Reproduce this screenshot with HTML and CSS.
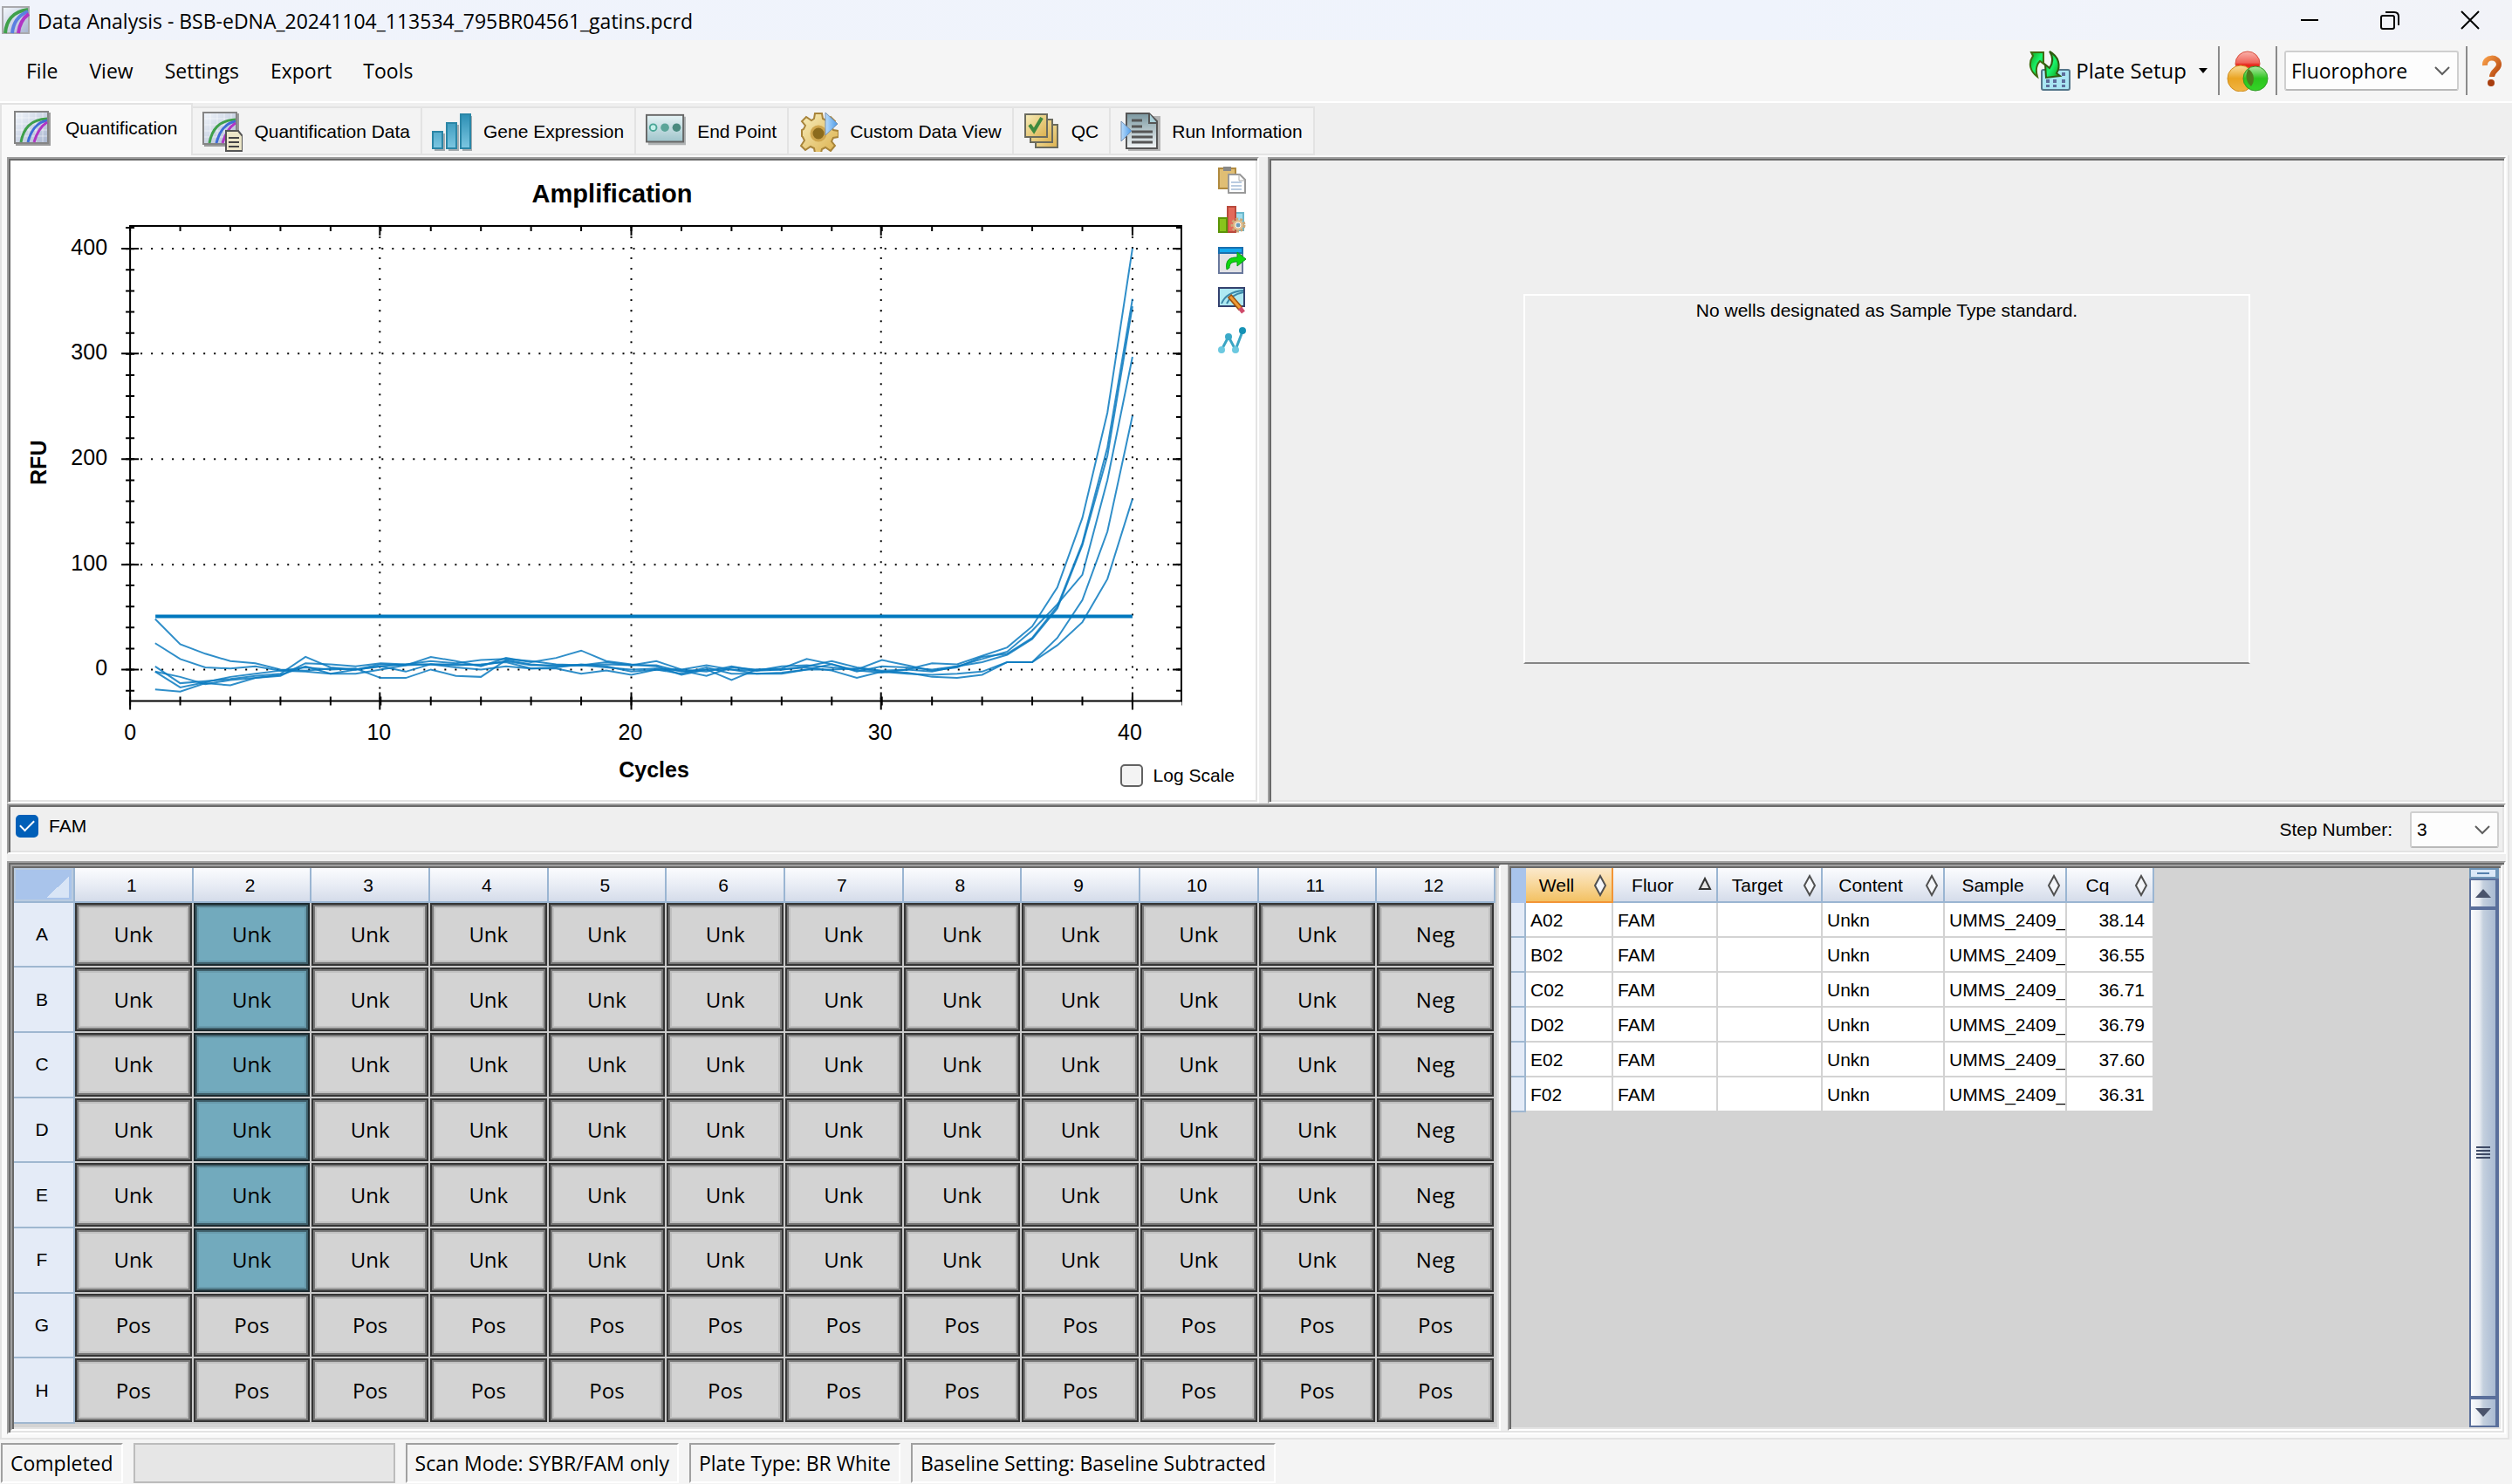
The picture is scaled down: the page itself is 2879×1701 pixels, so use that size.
FILE: index.html
```html
<!DOCTYPE html>
<html lang="en">
<head>
<meta charset="utf-8">
<title>Data Analysis - BSB-eDNA_20241104_113534_795BR04561_gatins.pcrd</title>
<link rel="stylesheet" href="styles.css">
</head>
<body>
<svg class="defs" aria-hidden="true">
  <defs>
    <linearGradient id="g-steel" x1="0" y1="0" x2="1" y2="1"><stop offset="0" stop-color="#f2f6fb"/><stop offset="1" stop-color="#a9b6d0"/></linearGradient>
    <linearGradient id="g-bar" x1="0" y1="0" x2="0" y2="1"><stop offset="0" stop-color="#2c8fb4"/><stop offset="1" stop-color="#7cc7e2"/></linearGradient>
    <linearGradient id="g-well" x1="0" y1="0" x2="0" y2="1"><stop offset="0" stop-color="#e6f3f5"/><stop offset="1" stop-color="#9fc4cb"/></linearGradient>
    <linearGradient id="g-gold" x1="0" y1="0" x2="1" y2="1"><stop offset="0" stop-color="#f7eebc"/><stop offset="1" stop-color="#dcb04c"/></linearGradient>
    <linearGradient id="g-doc" x1="0" y1="0" x2="0" y2="1"><stop offset="0" stop-color="#7b98a1"/><stop offset="1" stop-color="#f3f6f7"/></linearGradient>
    <linearGradient id="g-blue" x1="0" y1="0" x2="1" y2="0"><stop offset="0" stop-color="#b9dcfb"/><stop offset="1" stop-color="#4b9ae8"/></linearGradient>
    <linearGradient id="g-green" x1="0" y1="0" x2="1" y2="1"><stop offset="0" stop-color="#15a015"/><stop offset=".5" stop-color="#19f56e"/><stop offset="1" stop-color="#129a10"/></linearGradient>
    <linearGradient id="g-red" x1="0" y1="0" x2="0" y2="1"><stop offset="0" stop-color="#f9b3ac"/><stop offset=".45" stop-color="#f0665c"/><stop offset=".55" stop-color="#e8281c"/><stop offset="1" stop-color="#ea3a24"/></linearGradient>
    <linearGradient id="g-orange" x1="0" y1="0" x2="0" y2="1"><stop offset="0" stop-color="#f8dfa0"/><stop offset=".5" stop-color="#eaa422"/><stop offset="1" stop-color="#f0b545"/></linearGradient>
    <linearGradient id="g-lime" x1="0" y1="0" x2="0" y2="1"><stop offset="0" stop-color="#b4e8a8"/><stop offset=".5" stop-color="#2bc41d"/><stop offset="1" stop-color="#35d428"/></linearGradient>
    <linearGradient id="g-help" x1="0" y1="0" x2="1" y2="1"><stop offset="0" stop-color="#f59a45"/><stop offset="1" stop-color="#b4440d"/></linearGradient>
    <symbol id="i-curves" viewBox="0 0 42 40">
      <rect x="2" y="2" width="40" height="38" fill="#9a9a9a"/>
      <rect x="1" y="1" width="38" height="36" fill="url(#g-steel)" stroke="#858585" stroke-width="2"/>
      <path d="M2 8h36M2 15h36M2 22h36M2 29h36M9 2v34M17 2v34M25 2v34M33 2v34" stroke="#fff" stroke-opacity=".5"/>
      <g fill="none" stroke-width="3"><path d="M8 36C11 20 19 10 38 9" stroke="#3fa04b"/><path d="M16 36C19 24 26 13 38 11" stroke="#3e6cd6"/><path d="M23 36C26 26 30 18 38 13" stroke="#b035c4"/></g>
    </symbol>
    <symbol id="i-diamond" viewBox="0 0 18 26"><path d="M9 2L15 13 9 24 3 13z" fill="#f4f6fa" stroke="#505050" stroke-width="2"/></symbol>
    <symbol id="i-chevron" viewBox="0 0 18 12"><path d="M1 2L9 10 17 2" fill="none" stroke="#5f5f5f" stroke-width="2"/></symbol>
  </defs>
</svg>

<header class="titlebar">
  <svg class="app-icon" viewBox="0 0 32 32"><rect width="32" height="32" fill="#a9a9ad"/><rect x="2" y="2" width="28" height="28" fill="url(#g-steel)"/><g fill="none" stroke-width="4"><path d="M4 31C5 18 12 6 30 4" stroke="#3fa04b"/><path d="M12 31C13 20 18 11 30 6" stroke="#5b7fe0"/><path d="M19 31C20 22 24 14 31 9" stroke="#b035c4"/></g></svg>
  <h1 class="title">Data Analysis - BSB-eDNA_20241104_113534_795BR04561_gatins.pcrd</h1>
  <button class="win-btn" aria-label="Minimize"><svg viewBox="0 0 22 22"><path d="M1 11h20" stroke="#000" stroke-width="2"/></svg></button>
  <button class="win-btn" aria-label="Restore"><svg viewBox="0 0 22 22" fill="none" stroke="#000" stroke-width="2"><rect x="1" y="6" width="15" height="15" rx="2"/><path d="M6 2h10q5 0 5 5v10"/></svg></button>
  <button class="win-btn" aria-label="Close"><svg viewBox="0 0 22 22"><path d="M1 1l20 20M21 1L1 21" stroke="#000" stroke-width="2"/></svg></button>
</header>

<div class="menubar">
  <nav class="menu">
    <button>File</button><button>View</button><button>Settings</button><button>Export</button><button>Tools</button>
  </nav>
  <div class="tools">
    <button class="plate-setup">
      <svg class="ico48" viewBox="0 0 48 48">
        <rect x="15" y="23" width="32" height="23" rx="2" fill="#a9e6f3" stroke="#56768a" stroke-width="2"/>
        <path d="M20 34h4v4h-4zM28 34h4v4h-4zM38 34h4v4h-4zM20 40h4v3h-4zM28 40h4v3h-4zM38 40h4v3h-4zM38 26h4v4h-4z" fill="#5d6f9c"/>
        <path d="M3 3h14v13l-4-3c-4 4-5 11-3 18C2 25-1 16 5 7z" fill="url(#g-green)" stroke="#3f6a10" stroke-width="2"/>
        <path d="M24 2c11 6 13 17 8 25l4 3-16 2-1-15 5 4c4-6 4-13 0-19z" fill="url(#g-green)" stroke="#2f5a10" stroke-width="2"/>
      </svg>
      <span>Plate Setup</span>
      <svg class="caret" viewBox="0 0 10 6"><path d="M0 0h10L5 6z"/></svg>
    </button>
    <i class="sep"></i>
    <button class="icon-btn" aria-label="Fluorophore colors"><svg class="ico48" viewBox="0 0 48 48">
      <circle cx="24" cy="16" r="14" fill="url(#g-red)" stroke="#d9503f"/><circle cx="16" cy="33" r="15" fill="url(#g-orange)" stroke="#d08c1d"/><circle cx="33" cy="33" r="14" fill="url(#g-lime)" stroke="#2f9c24"/><path d="M25 22a14 14 0 0 1 3 20 15 15 0 0 1-3-20" fill="#4d7d1e"/></svg></button>
    <i class="sep"></i>
    <span class="combo combo-fluor"><select aria-label="Color by"><option>Fluorophore</option></select><svg><use href="#i-chevron"/></svg></span>
    <i class="sep"></i>
    <button class="help" aria-label="Help"><svg viewBox="0 0 24 36"><path d="M4 12C3 1 20 1 20 11c0 6-8 7-8 14" fill="none" stroke="url(#g-help)" stroke-width="6"/><circle cx="11" cy="32" r="4" fill="#a83e0f"/></svg></button>
  </div>
</div>

<nav class="tabs">
  <button class="tab selected"><svg class="tab-ico"><use href="#i-curves"/></svg>Quantification</button>
  <button class="tab"><svg class="tab-ico" viewBox="0 0 46 46"><use href="#i-curves" width="42" height="40"/><path d="M27 22h14l5 6v17H27z" fill="#ece6c8" stroke="#555" stroke-width="2"/><path d="M30 30h12M30 35h12M30 40h12" stroke="#444" stroke-width="2"/></svg>Quantification Data</button>
  <button class="tab"><svg class="tab-ico" viewBox="0 0 46 44"><path d="M3 24h12v20H3zM19 14h12v30H19zM35 4h11v40H35z" fill="#a5abae"/><path d="M1 22h11v19H1zM17 12h11v29H17zM33 2h11v39H33z" fill="url(#g-bar)" stroke="#2b86a6" stroke-width="2"/></svg>Gene Expression</button>
  <button class="tab"><svg class="tab-ico" viewBox="0 0 48 44"><path d="M3 4h45v34H3z" fill="#b0b3b4"/><rect x="1" y="2" width="44" height="32" fill="url(#g-well)" stroke="#666" stroke-width="2"/><circle cx="9" cy="17" r="4" fill="#c5f0ea" stroke="#49a596" stroke-width="2"/><circle cx="23" cy="17" r="5" fill="#5ba599"/><circle cx="37" cy="17" r="5" fill="#498a7f"/></svg>End Point</button>
  <button class="tab"><svg class="tab-ico" viewBox="0 0 46 46"><path d="M19 2h8l1 6 4 2 5-4 5 5-4 6 2 4 6 1v7l-6 1-2 4 4 5-5 6-6-4-4 2-1 4h-7l-1-5-4-2-6 4-5-5 4-6-2-4-1-1V21l2-1 2-4-4-5 5-5 6 4 3-2z" fill="url(#g-gold)" stroke="#a8843a" stroke-width="2"/><circle cx="23" cy="25" r="8" fill="#8b6b1d" stroke="#cfa64d" stroke-width="3"/><path d="M31 1v26l14-13z" fill="url(#g-blue)" stroke="#7790b0"/></svg>Custom Data View</button>
  <button class="tab"><svg class="tab-ico qc" viewBox="0 0 42 44"><g fill="url(#g-gold)" stroke="#6b6b5e" stroke-width="2"><rect x="14" y="14" width="25" height="26"/><rect x="8" y="8" width="25" height="26"/><rect x="2" y="2" width="25" height="26"/></g><path d="M7 14l5 7 9-15" fill="none" stroke="#3f8a3f" stroke-width="4"/></svg>QC</button>
  <button class="tab"><svg class="tab-ico" viewBox="0 0 46 44"><path d="M9 4h37v40H9z" fill="#b4b4b4"/><path d="M7 1h26l9 9v31H7z" fill="url(#g-doc)" stroke="#555" stroke-width="2"/><path d="M33 1v11h9" fill="#a9cfd8" stroke="#555" stroke-width="2"/><path d="M13 9h12M13 16h12M13 22h24M13 28h24M13 34h24" stroke="#555" stroke-width="3"/><path d="M1 10v23l12-12z" fill="url(#g-blue)" stroke="#7790b0"/></svg>Run Information</button>
</nav>

<main class="page">
  <div class="upper">
    <section class="bevel chart-pane">
      <svg class="chart" viewBox="12 184 1368 732" role="img" aria-label="Amplification chart">
        <g stroke="#000" stroke-width="2" fill="none">
          <path d="M149 285H1353M149 405H1353M149 526H1353M149 647H1353M149 767H1353M435 259V803M723 259V803M1009 259V803M1297 259V803" stroke-dasharray="2 10"/>
          <path d="M149 259V813M148 259H1353V804M149 803H1353"/>
          <path d="M139 285h20M139 405h20M139 526h20M139 647h20M139 767h20M1343 285h10M1343 405h10M1343 526h10M1343 647h10M1343 767h10"/>
          <path d="M435 793v20M723 793v20M1009 793v20M1297 793v20M435 259v11M723 259v11M1009 259v11M1297 259v11"/>
        </g>
        <g stroke="#000" fill="none">
          <path d="M149 260V804" stroke-width="10" stroke-dasharray="2 22.1"/>
          <path d="M1350 260V804" stroke-width="6" stroke-dasharray="2 22.1"/>
          <path d="M148 803H1354" stroke-width="10" stroke-dasharray="2 55.4"/>
          <path d="M148 262H1354" stroke-width="6" stroke-dasharray="2 55.4"/>
        </g>
        <g class="series" transform="translate(149 767) scale(28.7 -1.206)">
          <path d="M1 48L2 24 3 15 4 8 5 6 6 0 7-1 8 1 9 0 10 3 11 5 12 8 13 6 14 9 15 10 16 8 17 5 18 4 19 5 20 4 21 8 22 0 23-2 24 3 25-1 26 0 27 3 28 8 29 2 30-1 31 0 32 6 33 5 34 13 35 21 36 41 37 78 38 144 39 244 40 400"/>
          <path d="M1 25L2 10 3 2 4 1 5 3 6-1 7 2 8 0 9 1 10-8 11-8 12 0 13-6 14-7 15 9 16 5 17 3 18 4 19 2 20 0 21 1 22 0 23 4 24 0 25-1 26 3 27 4 28 2 29 0 30 9 31 4 32-1 33 2 34 12 35 15 36 30 37 60 38 120 39 211 40 352"/>
          <path d="M1 3L2-13 3-11 4-9 5-6 6-4 7 12 8 2 9 0 10 5 11 4 12 5 13 5 14 4 15 8 16 4 17 4 18 4 19 7 20 4 21 4 22-2 23 0 24-10 25 0 26 1 27 10 28 5 29-2 30 3 31 2 32 0 33 3 34 7 35 14 36 29 37 58 38 118 39 203 40 345"/>
          <path d="M1-2L2-17 3-12 4-7 5-4 6-1 7-2 8-4 9-4 10 0 11 4 12 12 13 8 14 3 15 11 16 7 17 11 18 18 19 8 20 5 21 3 22-5 23 0 24 0 25-4 26-3 27 0 28 5 29-1 30-3 31 0 32-2 33 3 34 10 35 17 36 37 37 62 38 90 39 180 40 297"/>
          <path d="M1-2L2-7 3-14 4-10 5-8 6-5 7 3 8-4 9 0 10 3 11-2 12 5 13 2 14 0 15 3 16 1 17 1 18-4 19-1 20-5 21 0 22-1 23-6 24 2 25 0 26 0 27 2 28-1 29-8 30-2 31-4 32-5 33-4 34-2 35 7 36 7 37 30 38 66 39 131 40 241"/>
          <path d="M1-19L2-21 3-13 4-15 5-8 6-6 7 6 8 5 9 3 10 6 11 5 12 5 13 4 14 5 15 7 16 1 17 2 18 5 19 3 20-2 21 0 22-4 23 2 24-4 25-4 26-4 27 0 28 0 29 1 30-2 31-3 32-7 33-8 34-5 35 7 36 7 37 23 38 45 39 86 40 162"/>
        </g>
        <path class="threshold" d="M178 706H1297"/>
        <g class="tick-label" text-anchor="end"><text x="123" y="292">400</text><text x="123" y="412">300</text><text x="123" y="533">200</text><text x="123" y="654">100</text><text x="123" y="774">0</text></g>
        <g class="tick-label" text-anchor="middle"><text x="149" y="848">0</text><text x="434" y="848">10</text><text x="722" y="848">20</text><text x="1008" y="848">30</text><text x="1294" y="848">40</text></g>
        <g class="axis-title" text-anchor="middle"><text x="749" y="890">Cycles</text><text transform="translate(53 530) rotate(-90)">RFU</text></g>
        <text class="chart-title" x="701" y="232" text-anchor="middle">Amplification</text>
      </svg>
      <div class="chart-tools">
        <button aria-label="Copy"><svg viewBox="0 0 32 32"><rect x="1" y="3" width="19" height="23" fill="#e0be74" stroke="#b08a3f" stroke-width="2"/><path d="M6 1h9v5H6z" fill="#888"/><path d="M12 10h13l6 6v15H12z" fill="#fff" stroke="#999" stroke-width="2"/><path d="M24 10v7h7" fill="none" stroke="#aaa"/><path d="M15 19h12M15 23h12M15 27h12" stroke="#b9cbe0" stroke-width="2"/></svg></button>
        <button aria-label="Chart settings"><svg viewBox="0 0 32 32"><rect x="19" y="8" width="10" height="20" fill="#9fdcec" stroke="#6cb8cd" stroke-width="2"/><rect x="11" y="1" width="9" height="29" fill="#e3695a" stroke="#b94a3d" stroke-width="2"/><rect x="1" y="14" width="9" height="16" fill="#88c41c" stroke="#5b9408" stroke-width="2"/><circle cx="23" cy="22" r="6" fill="#e3c090"/><circle cx="23" cy="22" r="7" fill="none" stroke="#cda878" stroke-width="3" stroke-dasharray="3 2"/><circle cx="23" cy="22" r="3" fill="#6f9cb8" stroke="#fff"/></svg></button>
        <button aria-label="Export chart"><svg viewBox="0 0 32 32"><rect x="1" y="2" width="27" height="29" fill="#e2e2e6" stroke="#69789c" stroke-width="2"/><path d="M0 1h29v8H0z" fill="#1a6fae"/><path d="M2 3h25v4H2z" fill="#14a8ef"/><path d="M10 27c-2-12 4-14 12-14V7l10 8-10 8v-5c-6 0-9 2-9 7z" fill="#0fd80f" stroke="#0a9a1b"/></svg></button>
        <button aria-label="Edit trace style"><svg viewBox="0 0 32 32"><rect x="1" y="2" width="29" height="21" fill="#aee9f2" stroke="#34426f" stroke-width="2"/><path d="M4 20C8 10 16 6 29 5M10 20c3-7 9-11 19-13" fill="none" stroke="#3a87a8" stroke-width="2"/><path d="M13 11l13 15" stroke="#99500e" stroke-width="6"/><path d="M14 12l12 14" stroke="#f09a35" stroke-width="3"/><path d="M25 25l4 5" stroke="#cf4a6a" stroke-width="5"/></svg></button>
        <button aria-label="Data points"><svg viewBox="0 0 32 32"><path d="M4 27L12 12 20 27 28 6" fill="none" stroke="#3aa5c4" stroke-width="3"/><circle cx="4" cy="27" r="4" fill="#6cc9e0"/><circle cx="12" cy="12" r="4" fill="#3aa9c8"/><circle cx="20" cy="27" r="4" fill="#6cc9e0"/><circle cx="28" cy="5" r="4" fill="#1592b5"/></svg></button>
      </div>
      <label class="check log-scale"><input type="checkbox">Log Scale</label>
    </section>
    <section class="bevel standard-pane">
      <p class="notice">No wells designated as Sample Type standard.</p>
    </section>
  </div>

  <section class="bevel filter-bar">
    <label class="check fam"><input type="checkbox" checked>FAM</label>
    <label class="step" for="step">Step Number:</label>
    <span class="combo combo-step"><select id="step"><option>3</option></select><svg><use href="#i-chevron"/></svg></span>
  </section>

  <div class="bevel lower">
    <section class="bevel plate-pane">
      <table class="plate">
        <thead><tr><th class="corner" aria-label="Select all"></th><th>1</th><th>2</th><th>3</th><th>4</th><th>5</th><th>6</th><th>7</th><th>8</th><th>9</th><th>10</th><th>11</th><th>12</th></tr></thead>
        <tbody>
          <tr><th>A</th><td>Unk</td><td class="on">Unk</td><td>Unk</td><td>Unk</td><td>Unk</td><td>Unk</td><td>Unk</td><td>Unk</td><td>Unk</td><td>Unk</td><td>Unk</td><td>Neg</td></tr>
          <tr><th>B</th><td>Unk</td><td class="on">Unk</td><td>Unk</td><td>Unk</td><td>Unk</td><td>Unk</td><td>Unk</td><td>Unk</td><td>Unk</td><td>Unk</td><td>Unk</td><td>Neg</td></tr>
          <tr><th>C</th><td>Unk</td><td class="on">Unk</td><td>Unk</td><td>Unk</td><td>Unk</td><td>Unk</td><td>Unk</td><td>Unk</td><td>Unk</td><td>Unk</td><td>Unk</td><td>Neg</td></tr>
          <tr><th>D</th><td>Unk</td><td class="on">Unk</td><td>Unk</td><td>Unk</td><td>Unk</td><td>Unk</td><td>Unk</td><td>Unk</td><td>Unk</td><td>Unk</td><td>Unk</td><td>Neg</td></tr>
          <tr><th>E</th><td>Unk</td><td class="on">Unk</td><td>Unk</td><td>Unk</td><td>Unk</td><td>Unk</td><td>Unk</td><td>Unk</td><td>Unk</td><td>Unk</td><td>Unk</td><td>Neg</td></tr>
          <tr><th>F</th><td>Unk</td><td class="on">Unk</td><td>Unk</td><td>Unk</td><td>Unk</td><td>Unk</td><td>Unk</td><td>Unk</td><td>Unk</td><td>Unk</td><td>Unk</td><td>Neg</td></tr>
          <tr><th>G</th><td>Pos</td><td>Pos</td><td>Pos</td><td>Pos</td><td>Pos</td><td>Pos</td><td>Pos</td><td>Pos</td><td>Pos</td><td>Pos</td><td>Pos</td><td>Pos</td></tr>
          <tr><th>H</th><td>Pos</td><td>Pos</td><td>Pos</td><td>Pos</td><td>Pos</td><td>Pos</td><td>Pos</td><td>Pos</td><td>Pos</td><td>Pos</td><td>Pos</td><td>Pos</td></tr>
        </tbody>
      </table>
    </section>
    <section class="bevel results-pane">
      <table class="results">
        <colgroup><col class="c-row"><col class="c-s"><col class="c-m"><col class="c-m"><col class="c-l"><col class="c-l"><col class="c-s"></colgroup>
        <thead><tr><th class="corner" aria-label="Select all"></th>
          <th class="sorted"><div><span>Well</span><svg><use href="#i-diamond"/></svg></div></th>
          <th><div><span>Fluor</span><svg viewBox="0 0 18 26"><path d="M9 5L15 17H3z" fill="#e4e4e4" stroke="#333" stroke-width="2"/></svg></div></th>
          <th><div><span>Target</span><svg><use href="#i-diamond"/></svg></div></th>
          <th><div><span>Content</span><svg><use href="#i-diamond"/></svg></div></th>
          <th><div><span>Sample</span><svg><use href="#i-diamond"/></svg></div></th>
          <th><div><span>Cq</span><svg><use href="#i-diamond"/></svg></div></th></tr></thead>
        <tbody>
          <tr><th></th><td>A02</td><td>FAM</td><td></td><td>Unkn</td><td>UMMS_2409_</td><td class="num">38.14</td></tr>
          <tr><th></th><td>B02</td><td>FAM</td><td></td><td>Unkn</td><td>UMMS_2409_</td><td class="num">36.55</td></tr>
          <tr><th></th><td>C02</td><td>FAM</td><td></td><td>Unkn</td><td>UMMS_2409_</td><td class="num">36.71</td></tr>
          <tr><th></th><td>D02</td><td>FAM</td><td></td><td>Unkn</td><td>UMMS_2409_</td><td class="num">36.79</td></tr>
          <tr><th></th><td>E02</td><td>FAM</td><td></td><td>Unkn</td><td>UMMS_2409_</td><td class="num">37.60</td></tr>
          <tr><th></th><td>F02</td><td>FAM</td><td></td><td>Unkn</td><td>UMMS_2409_</td><td class="num">36.31</td></tr>
        </tbody>
      </table>
      <div class="scrollbar">
        <div class="split-grip"><i></i></div>
        <button aria-label="Scroll up"><svg viewBox="0 0 18 10"><path d="M9 0l9 10H0z" fill="#4a546c"/></svg></button>
        <div class="thumb"><i></i><i></i><i></i><i></i></div>
        <button aria-label="Scroll down"><svg viewBox="0 0 18 10"><path d="M0 0h18L9 10z" fill="#4a546c"/></svg></button>
      </div>
    </section>
  </div>
</main>

<footer class="status">
  <span class="cell">Completed</span>
  <span class="progress" role="progressbar" aria-label="Progress"></span>
  <span class="cell">Scan Mode: SYBR/FAM only</span>
  <span class="cell">Plate Type: BR White</span>
  <span class="cell">Baseline Setting: Baseline Subtracted</span>
</footer>
</body>
</html>
```
FILE: styles.css
```css
* { box-sizing: border-box; }

body {
  margin: 0;
  min-height: 100vh;
  display: flex;
  flex-direction: column;
  background: #efefef;
  color: #000;
  font: 21px/28px "Liberation Sans", Arial, sans-serif;
}

button, select, input { font: inherit; color: inherit; margin: 0; }
button { border: 0; padding: 0; background: none; }
svg { display: block; }
.defs { position: absolute; width: 0; height: 0; }

/* Title bar */
.titlebar {
  display: flex;
  align-items: center;
  height: 46px;
  padding-right: 2px;
  background: linear-gradient(90deg, #f0f3fb, #eff3fc 70%, #f2f3f8);
}
.app-icon { width: 32px; height: 32px; margin-left: 2px; }
.title {
  flex: 1;
  margin: 2px 0 0 9px;
  font: 400 23px/32px "Open Sans", sans-serif;
}
.win-btn { width: 92px; height: 46px; display: grid; place-items: center; }
.win-btn svg { width: 22px; height: 22px; }

/* Menu and toolbar */
.menubar {
  display: flex;
  justify-content: space-between;
  height: 72px;
  background: #f5f5f5;
  border-bottom: 2px solid #fff;
  font: 23px/32px "Open Sans", sans-serif;
}
.menu { display: flex; gap: 36px; padding-left: 30px; align-items: center; }
.tools { display: flex; align-items: center; padding-right: 11px; }
.plate-setup { display: flex; align-items: center; gap: 6px; font-size: 24px; }
.ico48 { width: 48px; height: 48px; }
.caret { width: 10px; height: 6px; margin-left: 8px; }
.sep { width: 2px; height: 56px; margin: 0 8px 0 12px; background: #8a8a8a; }
.icon-btn + .sep, .combo + .sep { margin-left: 8px; }
.help { width: 24px; height: 36px; margin-left: 8px; }

.combo { display: grid; align-items: center; }
.combo select, .combo svg { grid-area: 1 / 1; }
.combo select {
  appearance: none;
  width: 100%;
  height: 100%;
  padding: 0 6px;
  border: 2px solid #cfcfcf;
  border-bottom-color: #b9b9b9;
  border-radius: 3px;
  background: #fdfdfd;
}
.combo svg { width: 18px; height: 12px; justify-self: end; margin-right: 10px; pointer-events: none; }
.combo-fluor { width: 200px; height: 46px; }
.combo-step { width: 102px; height: 42px; }

/* Tabs */
.tabs { display: flex; align-items: flex-end; height: 60px; }
.tab {
  display: flex;
  align-items: center;
  gap: 13px;
  height: 56px;
  padding: 2px 12px 0 11px;
  border: 2px solid #e3e3e3;
  border-left-width: 0;
  background: #f3f3f3;
}
.tab.selected {
  height: 60px;
  padding: 0 16px 4px 14px;
  gap: 17px;
  border-left-width: 2px;
  border-bottom: 0;
  background: #f9f9f9;
}
.tab-ico { width: 46px; height: 46px; }
.selected .tab-ico { width: 42px; height: 40px; }
.qc { width: 42px; }

/* Panels */
.page {
  flex: 1;
  display: flex;
  flex-direction: column;
  margin-right: 3px;
  padding: 2px 2px 4px 6px;
  border: 2px solid #e3e3e3;
  border-top: 0;
  background: linear-gradient(#efefef, #efefef) content-box, #f9f9f9;
}
.bevel {
  padding: 2px;
  border: 2px solid;
  border-color: #9f9f9f #fff #fff #9f9f9f;
  box-shadow: inset 2px 2px #696969, inset -2px -2px #e3e3e3;
}
.upper { display: grid; grid-template-columns: 1434fr 1418fr; gap: 10px; }

.chart-pane {
  display: grid;
  grid-template-columns: 1fr 58px;
  background: #fff;
}
.chart { grid-area: 1 / 1; width: 100%; height: auto; }
.series path { fill: none; stroke: #0a7abf; stroke-width: 2; stroke-opacity: .85; vector-effect: non-scaling-stroke; }
.threshold { stroke: #0078be; stroke-width: 4; }
.tick-label { font-size: 25px; }
.axis-title { font-size: 25px; font-weight: 700; }
.chart-title { font-size: 29px; font-weight: 700; }
.chart-tools { grid-area: 1 / 2; display: flex; flex-direction: column; gap: 14px; padding: 6px 0 0 15px; }
.chart-tools svg { width: 32px; height: 32px; }

.check { display: flex; align-items: center; gap: 12px; }
.check input {
  appearance: none;
  display: grid;
  place-items: center;
  width: 26px;
  height: 26px;
  border: 2px solid #626262;
  border-radius: 5px;
  background: #f3f3f3;
}
.check input:checked { border-color: #005fb8; background: #005fb8; }
.check input:checked::after {
  content: "";
  width: 14px;
  height: 7px;
  margin-bottom: 5px;
  border: solid #fff;
  border-width: 0 0 2px 2px;
  transform: rotate(-45deg);
}
.log-scale { grid-area: 1 / 1 / 2 / 3; place-self: end; margin: 0 24px 14px 0; }

.standard-pane { display: grid; justify-items: center; align-items: start; }
.notice {
  width: 59%;
  height: 424px;
  margin: 153px 0 0;
  padding-top: 3px;
  border: 2px solid #fff;
  border-bottom-color: #858585;
  text-align: center;
}

.filter-bar { display: flex; align-items: center; height: 58px; padding-left: 8px; padding-right: 6px; }
.fam { margin: 0 auto 6px 0; }
.step { margin: 2px 20px 0 0; }
.combo-step { margin-top: 2px; }

.lower {
  flex: 1;
  display: grid;
  grid-template-columns: 1708fr 1140fr;
  gap: 8px;
  margin-top: 8px;
}
.plate-pane, .results-pane { background: #d3d3d3; }
.plate-pane { padding: 2px 4px 6px 2px; }

table { border-collapse: separate; border-spacing: 0; }
th, td { padding: 0; font-weight: 400; }
thead th {
  height: 40px;
  padding-top: 2px;
  border-right: 2px solid #9ab5d2;
  border-bottom: 2px solid #9ab5d2;
  background: linear-gradient(#fbfcfe, #e9edf5 50%, #d5dcea);
}
tbody th {
  border-right: 2px solid #9fb7d0;
  border-bottom: 2px solid #9fb7d0;
  background: #e4ebf7;
}

.plate { width: 100%; height: 100%; table-layout: fixed; text-align: center; }
.plate th { padding-right: 4px; }
.plate .corner {
  width: 70px;
  background: linear-gradient(135deg, transparent 50%, #d9e5f6 50%) 56px 12px / 26px 24px no-repeat, #a9c4eb;
  background-position: right 5px bottom 4px;
  box-shadow: inset 0 0 0 2px #b9cbe0;
}
.plate td {
  border-right: 2px solid #cacaca;
  border-bottom: 2px solid #cacaca;
  background: #d3d3d3 padding-box;
  box-shadow: inset 0 0 0 2px rgb(0 0 0 / 56%), inset 0 0 0 4px rgb(0 0 0 / 38%), inset 0 0 0 6px rgb(0 0 0 / 9%);
  font: 24px/32px "Open Sans", sans-serif;
}
.plate .on { background-color: #72aabd; }

.results-pane { display: flex; justify-content: space-between; align-items: flex-start; }
.results { width: 737px; table-layout: fixed; }
.c-row { width: 17px; }
.c-s { width: 100px; }
.c-m { width: 120px; }
.c-l { width: 140px; }
.results .corner { background: #a9c4eb; border-color: #a9c4eb; }
.results .sorted { border-color: #f29536; background: linear-gradient(#fbe9cc, #f8d79a 50%, #f3c163); }
.results thead div { display: flex; align-items: center; padding-right: 4px; }
.results thead span { flex: 1; padding-right: 6px; text-align: center; }
.results thead svg { width: 18px; height: 26px; }
.results td {
  height: 40px;
  padding: 2px 0 0 5px;
  border-right: 2px solid #d3d3d3;
  border-bottom: 2px solid #d3d3d3;
  background: #fff;
  overflow: hidden;
  white-space: nowrap;
}
.results .num { padding-right: 9px; text-align: right; }

.scrollbar { align-self: stretch; display: flex; flex-direction: column; width: 34px; }
.scrollbar > * {
  display: flex;
  flex-direction: column;
  align-items: center;
  justify-content: center;
  border: 2px solid #5a6f9b;
  border-right-width: 4px;
  background: linear-gradient(90deg, #fbfcfd, #e8ecf2 35%, #c4d0de 50%, #a9bad2);
}
.scrollbar button { height: 34px; }
.scrollbar svg { width: 18px; height: 10px; }
.scrollbar .split-grip { height: 12px; border-color: #6f95b8; background: #dbe8f7; }
.split-grip i { width: 14px; height: 2px; background: #5580ad; }
.thumb { flex: 1; gap: 2px; }
.thumb i { width: 16px; height: 2px; background: #3f4b66; }

/* Status bar */
.status {
  display: flex;
  gap: 12px;
  height: 51px;
  padding: 4px 1px 1px;
  background: #f4f4f4;
  font: 23px/32px "Open Sans", sans-serif;
}
.cell {
  padding: 5px 9px;
  border: 2px solid #a0a0a0;
  border-right-color: #fff;
  border-bottom-color: #fff;
}
.progress { width: 300px; border: 2px solid #bcbcbc; background: #e6e6e6; }
```
